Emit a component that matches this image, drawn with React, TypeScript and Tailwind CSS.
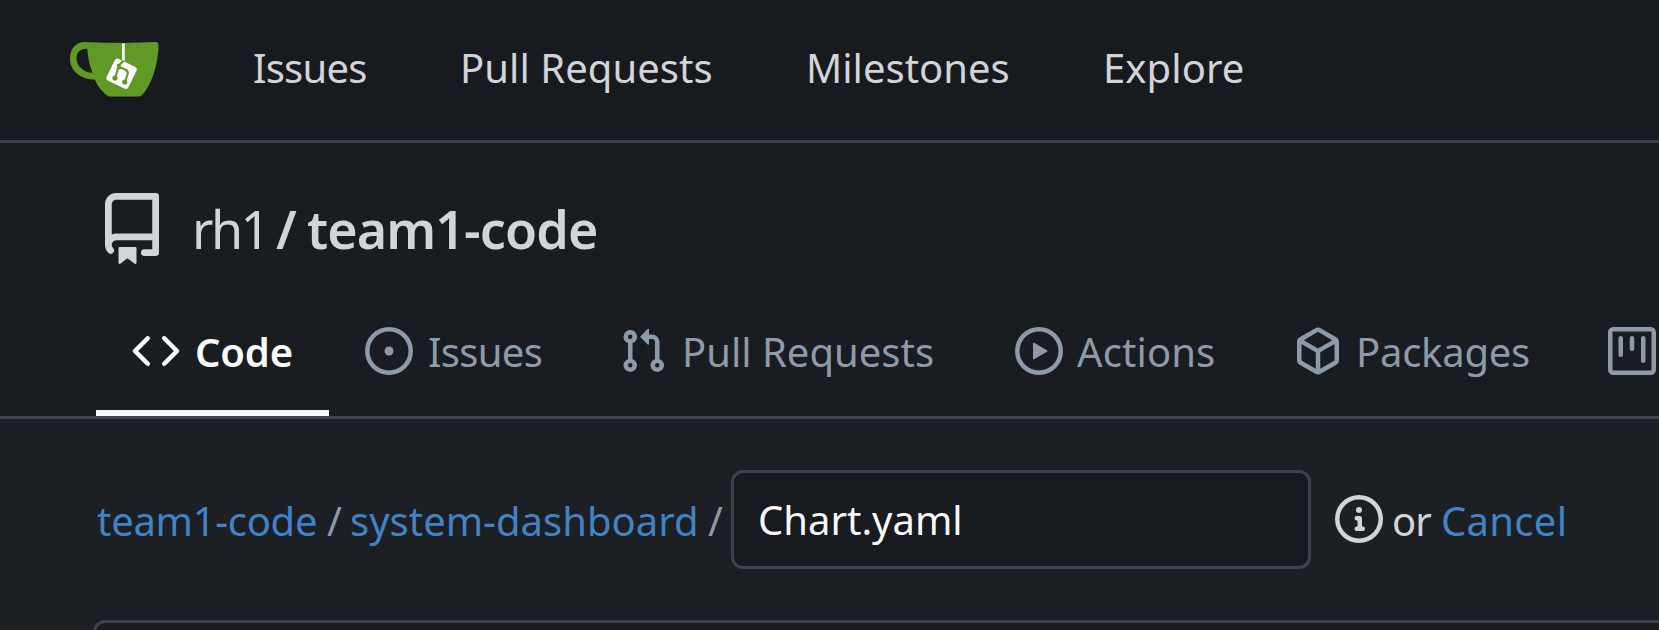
import React from "react";

const F = "font-['Noto_Sans',sans-serif]";

function Icon({ size, className = "", children }: { size: number; className?: string; children: React.ReactNode }) {
  return (
    <svg width={size} height={size} viewBox="0 0 16 16" fill="currentColor" className={`block shrink-0 ${className}`}>
      {children}
    </svg>
  );
}

function Logo() {
  return (
    <svg width="90" height="56" viewBox="0 0 90 56" className="block shrink-0">
      <path
        fill="#609926"
        fillRule="evenodd"
        d="M15 1C30 2 65 2.300 86 1.100q2.600 0 2.500 4.200C88.400 24 80 48 71 54.800q-1.500.700-3 .700H40q-1.500 0-2.800-1C31.500 50.500 27 44 24.800 38.500 10 38.500 0 29.500 0 17.500 0 8 5.500 1 15 1ZM17.300 7.800C10 7.600 6.500 11.500 6.500 17.500c0 7.500 7 14 16 14.300-3-7-4.700-15-5.200-24Z"
      />
      <path stroke="#fff" strokeWidth="2.600" d="M53.400 2.500V20" />
      <rect x="39.500" y="20.600" width="24.200" height="24.200" rx="3.200" fill="#fff" transform="rotate(26 51.600 32.700)" />
      <g fill="none" stroke="#609926" strokeWidth="2.100">
        <path d="M53.600 19.500 L48.800 24.500 L45.200 37 M48.500 27.500 L51.500 26.800 L56 29 Q58.600 30.500 57.600 33.500 L55 41" />
        <g fill="#609926" stroke="none">
          <circle cx="49" cy="24.500" r="2.100" />
          <circle cx="45" cy="37" r="2.600" />
          <circle cx="54.700" cy="41" r="2.600" />
        </g>
      </g>
    </svg>
  );
}

const nav = [
  { label: "Issues", cls: "ml-[93px] w-[207px] tracking-[-0.8px]" },
  { label: "Pull Requests", cls: "w-[346px] tracking-[0.05px]" },
  { label: "Milestones", cls: "w-[297px]" },
  { label: "Explore", cls: "tracking-[0.1px]" },
];

export default function App() {
  return (
    <div className={`flex h-[630px] w-full flex-col overflow-hidden whitespace-nowrap bg-[#1c1f23] text-[40px] leading-[56px] text-[#d2d4d8] ${F}`}>
      <nav className="flex h-[143px] shrink-0 border-b-3 border-[#3b444c] bg-[#171a1e] pl-[70px] pt-[41px]">
        <Logo />
        {nav.map((n) => (
          <a key={n.label} className={`-mt-px shrink-0 ${n.cls}`}>{n.label}</a>
        ))}
      </nav>

      <header className="flex h-[276px] shrink-0 flex-col border-b-3 border-[#3b444c] bg-[#191c20]">
        <div className="flex h-[173px] shrink-0 pl-[96px] pt-[50px]">
          <Icon size={72}>
            <path d="M2 2.500A2.500 2.500 0 0 1 4.500 0h8.750a.75.75 0 0 1 .75.75v12.500a.75.75 0 0 1-.75.75h-2.500a.75.75 0 0 1 0-1.500h1.750v-2h-8a1 1 0 0 0-.714 1.700.75.75 0 1 1-1.072 1.050A2.495 2.495 0 0 1 2 11.500Zm10.500-1h-8a1 1 0 0 0-1 1v6.708A2.486 2.486 0 0 1 4.500 9h8ZM5 12.250a.25.25 0 0 1 .25-.25h3.500a.25.25 0 0 1 .25.25v3.250a.25.25 0 0 1-.4.2l-1.450-1.087a.249.249 0 0 0-.3 0L5.400 15.700a.25.25 0 0 1-.4-.2Z" />
          </Icon>
          <div className="ml-[24px] flex text-[52px] leading-[72px]">
            <span className="w-[84px] font-normal tracking-[-2.6px]">rh1</span>
            <span className="w-[31px] font-semibold">/</span>
            <span className="font-semibold tracking-[-0.9px]">team1-code</span>
          </div>
        </div>
        <div className="flex h-[100px] shrink-0 pl-[96px]">
          <div className="flex h-[100px] w-[233px] shrink-0 border-b-6 border-[#f8f9fa] pl-[36px] pt-[11px] text-[#f8f9fa]">
            <Icon size={48}>
              <path d="m11.280 3.220 4.250 4.250a.75.75 0 0 1 0 1.060l-4.250 4.250a.749.749 0 0 1-1.275-.326.749.749 0 0 1 .215-.734L13.940 8l-3.720-3.720a.749.749 0 0 1 .326-1.275.749.749 0 0 1 .734.215Zm-6.560 0a.751.751 0 0 1 1.042.018.751.751 0 0 1 .018 1.042L2.060 8l3.720 3.720a.749.749 0 0 1-.326 1.275.749.749 0 0 1-.734-.215L.47 8.530a.75.75 0 0 1 0-1.060Z" />
            </Icon>
            <span className="-mt-[3px] ml-[15px] font-semibold tracking-[-0.2px]">Code</span>
          </div>
          <div className="flex pl-[36px] pt-[11px] text-[#8f9aa8]">
            <div className="flex w-[254px] shrink-0">
              <Icon size={48}>
                <path d="M8 9.500a1.500 1.500 0 1 0 0-3 1.500 1.500 0 0 0 0 3Z" />
                <path d="M8 0a8 8 0 1 1 0 16A8 8 0 0 1 8 0ZM1.500 8a6.500 6.500 0 1 0 13 0 6.500 6.500 0 0 0-13 0Z" />
              </Icon>
              <span className="-mt-[3px] ml-[15px] tracking-[-0.7px]">Issues</span>
            </div>
            <div className="flex w-[396px] shrink-0">
              <Icon size={48}>
                <path d="M1.500 3.250a2.250 2.250 0 1 1 3 2.122v5.256a2.251 2.251 0 1 1-1.500 0V5.372A2.250 2.250 0 0 1 1.500 3.250Zm5.677-.177L9.573.677A.25.25 0 0 1 10 .854V2.500h1A2.500 2.500 0 0 1 13.500 5v5.628a2.251 2.251 0 1 1-1.500 0V5a1 1 0 0 0-1-1h-1v1.646a.25.25 0 0 1-.427.177L7.177 3.427a.25.25 0 0 1 0-.354ZM3.750 2.500a.75.75 0 1 0 0 1.500.75.75 0 0 0 0-1.500Zm0 9.500a.75.75 0 1 0 0 1.500.75.75 0 0 0 0-1.500Zm8.250.75a.75.75 0 1 0 1.500 0 .75.75 0 0 0-1.500 0Z" />
              </Icon>
              <span className="-mt-[3px] ml-[15px]">Pull Requests</span>
            </div>
            <div className="flex w-[279px] shrink-0">
              <Icon size={48}>
                <path d="M8 0a8 8 0 1 1 0 16A8 8 0 0 1 8 0ZM1.500 8a6.500 6.500 0 1 0 13 0 6.500 6.500 0 0 0-13 0Zm4.879-2.773 4.264 2.559a.25.25 0 0 1 0 .428l-4.264 2.559A.25.25 0 0 1 6 10.559V5.442a.25.25 0 0 1 .379-.215Z" />
              </Icon>
              <span className="-mt-[3px] ml-[14px] tracking-[0.1px]">Actions</span>
            </div>
            <div className="flex w-[314px] shrink-0">
              <Icon size={48}>
                <path d="m8.878.392 5.250 3.045c.54.314.872.890.872 1.514v6.098a1.750 1.750 0 0 1-.872 1.514l-5.250 3.045a1.750 1.750 0 0 1-1.756 0l-5.250-3.045A1.750 1.750 0 0 1 1 11.049V4.951c0-.624.332-1.201.872-1.514L7.122.392a1.750 1.750 0 0 1 1.756 0ZM7.875 1.690l-4.630 2.685L8 7.133l4.755-2.758-4.630-2.685a.248.248 0 0 0-.25 0ZM2.500 5.677v5.372c0 .090.047.171.125.216l4.625 2.683V8.432Zm6.250 8.271 4.625-2.683a.25.25 0 0 0 .125-.216V5.677L8.750 8.432Z" />
              </Icon>
              <span className="-mt-[3px] ml-[14px] tracking-[-0.25px]">Packages</span>
            </div>
            <Icon size={48}>
              <path d="M1.750 0h12.500C15.216 0 16 .784 16 1.750v12.500A1.750 1.750 0 0 1 14.250 16H1.750A1.750 1.750 0 0 1 0 14.250V1.750C0 .784.784 0 1.750 0ZM1.500 1.750v12.500c0 .138.112.25.25.25h12.500a.25.25 0 0 0 .25-.25V1.750a.25.25 0 0 0-.25-.25H1.750a.25.25 0 0 0-.25.25ZM11.750 3a.75.75 0 0 1 .75.75v7.500a.75.75 0 0 1-1.500 0v-7.500a.75.75 0 0 1 .75-.75Zm-8.250.75a.75.75 0 0 1 1.500 0v5.500a.75.75 0 0 1-1.500 0ZM8 3a.75.75 0 0 1 .75.75v3.500a.75.75 0 0 1-1.500 0v-3.500A.75.75 0 0 1 8 3Z" />
            </Icon>
          </div>
        </div>
      </header>

      <main className="flex flex-1 flex-col">
        <div className="flex h-[201px] shrink-0 pl-[96px] pt-[51px]">
          <div className="flex pt-[23px] text-[#4183c4]">
            <span className="w-[231px] pl-px tracking-[-0.3px]">team1-code</span>
            <span className="w-[23px] text-[#8f9aa8]">/</span>
            <span className="w-[358px]">system-dashboard</span>
            <span className="w-[23px] text-[#8f9aa8]">/</span>
          </div>
          <div className="h-[99px] w-[580px] shrink-0 rounded-[12px] border-3 border-[#3b444c] bg-[#171a1e] pl-[24px] pt-[19px] text-[#f8f8f8]">Chart.yaml</div>
          <div className="flex pl-[24px]">
            <Icon size={48} className="mt-[25px]">
              <path d="M0 8a8 8 0 1 1 16 0A8 8 0 0 1 0 8Zm8-6.500a6.500 6.500 0 1 0 0 13 6.500 6.500 0 0 0 0-13ZM6.500 7.750A.75.75 0 0 1 7.250 7h1a.75.75 0 0 1 .75.75v2.750h.25a.75.75 0 0 1 0 1.500h-2a.75.75 0 0 1 0-1.500h.25v-2h-.25a.75.75 0 0 1-.75-.75ZM8 6a1 1 0 1 1 0-2 1 1 0 0 1 0 2Z" />
            </Icon>
            <span className="ml-[9px] w-[49px] pt-[23px] tracking-[-1px]">or</span>
            <span className="pt-[23px] tracking-[0.3px] text-[#4183c4]">Cancel</span>
          </div>
        </div>
        <div className="ml-[93px] h-[40px] w-[1700px] shrink-0 rounded-tl-[12px] border-3 border-[#3b444c] bg-[#191c20]" />
      </main>
    </div>
  );
}
